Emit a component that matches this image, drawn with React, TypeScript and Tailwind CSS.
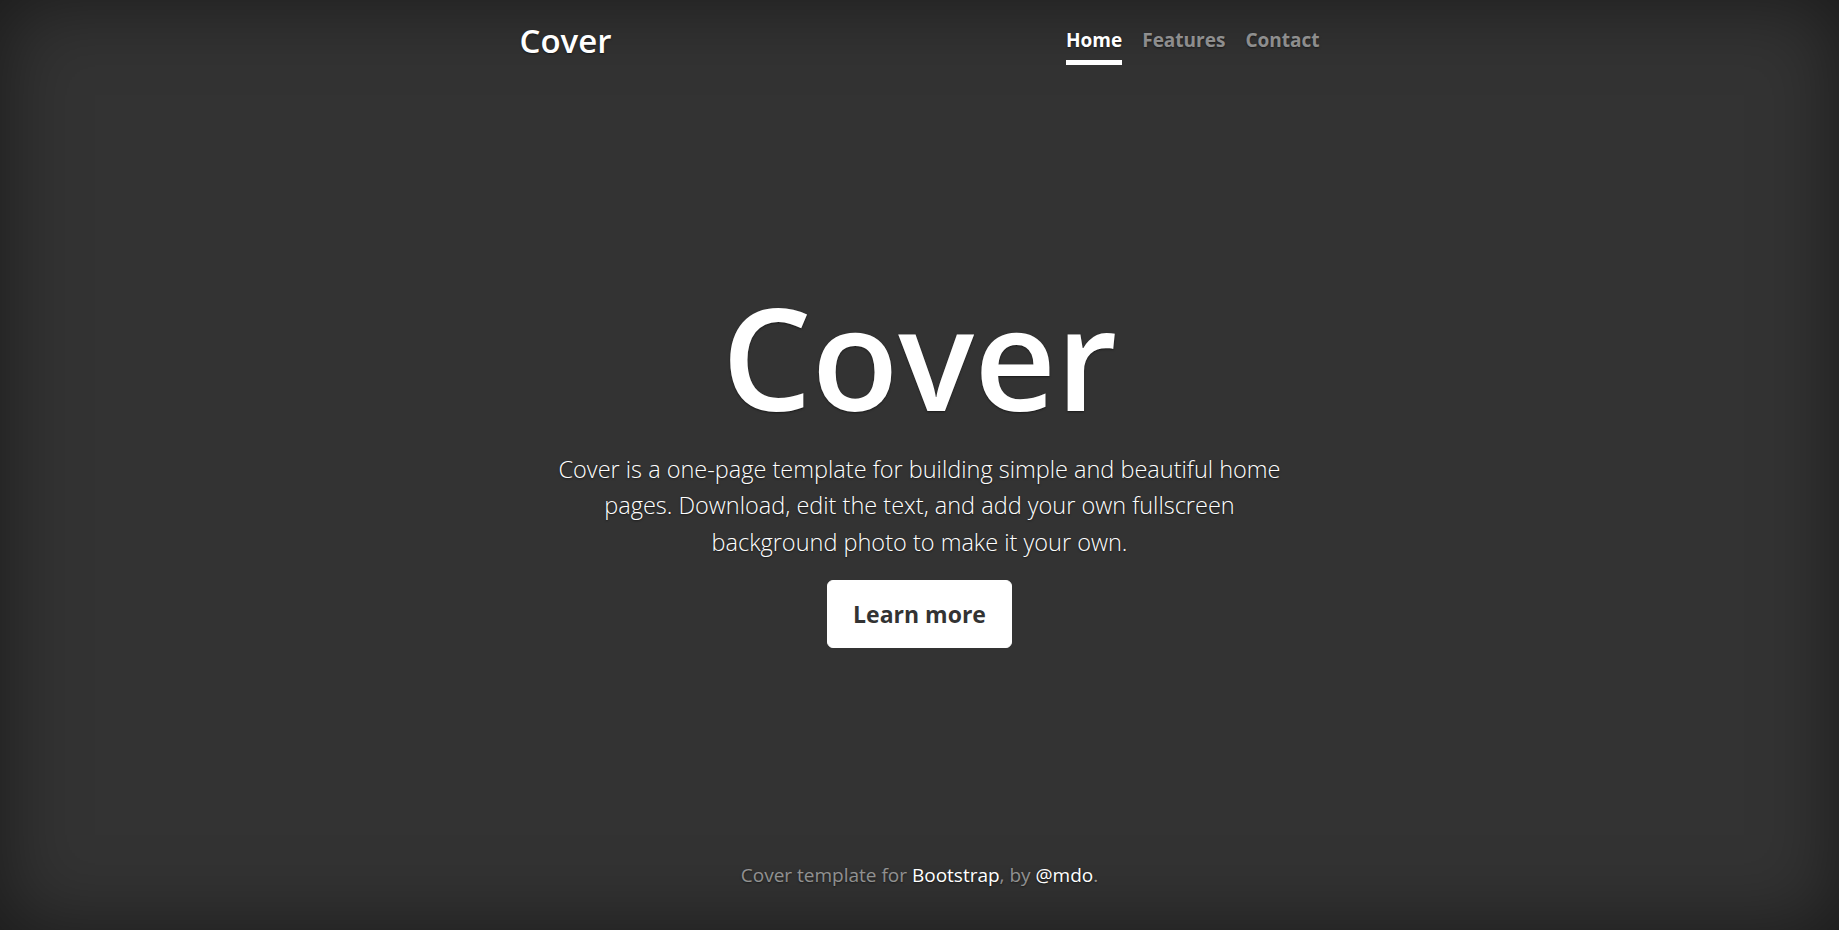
export default function App() {
  return (
    <div
      className="h-screen w-full bg-[#333] text-white text-center shadow-[inset_0_0_5rem_rgba(0,0,0,0.5)] [text-shadow:0_1px_2px_rgba(0,0,0,0.5)]"
      style={{ fontFamily: '"Open Sans", "Noto Sans", "Liberation Sans", sans-serif' }}
    >
      <div className="mx-auto flex h-full w-full max-w-[840px] flex-col p-5">
        {/* Header */}
        <header className="mb-auto flex items-start justify-between">
          <h3 className="mt-[1px] text-[33px] font-semibold leading-[1.2]">Cover</h3>
          <nav className="flex gap-5 text-[19px] font-bold leading-[30px]">
            <a href="#" className="border-b-[5px] border-white pt-[5px] pb-[5px] text-white">
              Home
            </a>
            <a href="#" className="border-b-[5px] border-transparent pt-[5px] pb-[5px] text-white/50">
              Features
            </a>
            <a href="#" className="border-b-[5px] border-transparent pt-[5px] pb-[5px] text-white/50">
              Contact
            </a>
          </nav>
        </header>

        {/* Main */}
        <main className="flex flex-col items-center px-5 pt-[14px]">
          <h1 className="mb-[10px] text-[142px] font-semibold leading-[1.2]">Cover</h1>
          <p className="mb-5 text-[23.5px] font-light leading-[36.5px]">
            Cover is a one-page template for building simple and beautiful home
            <br />
            pages. Download, edit the text, and add your own fullscreen
            <br />
            background photo to make it your own.
          </p>
          <a
            href="#"
            className="mb-5 flex h-[68px] w-[185px] items-center justify-center rounded-[6px] border border-white bg-white text-[23px] font-bold text-[#333] [text-shadow:none]"
          >
            Learn more
          </a>
        </main>

        {/* Footer */}
        <footer className="mt-auto text-[19px] leading-[30px] text-white/50">
          <p className="mb-5">
            Cover template for <a href="#" className="text-white">Bootstrap</a>, by{' '}
            <a href="#" className="text-white">@mdo</a>.
          </p>
        </footer>
      </div>
    </div>
  );
}
